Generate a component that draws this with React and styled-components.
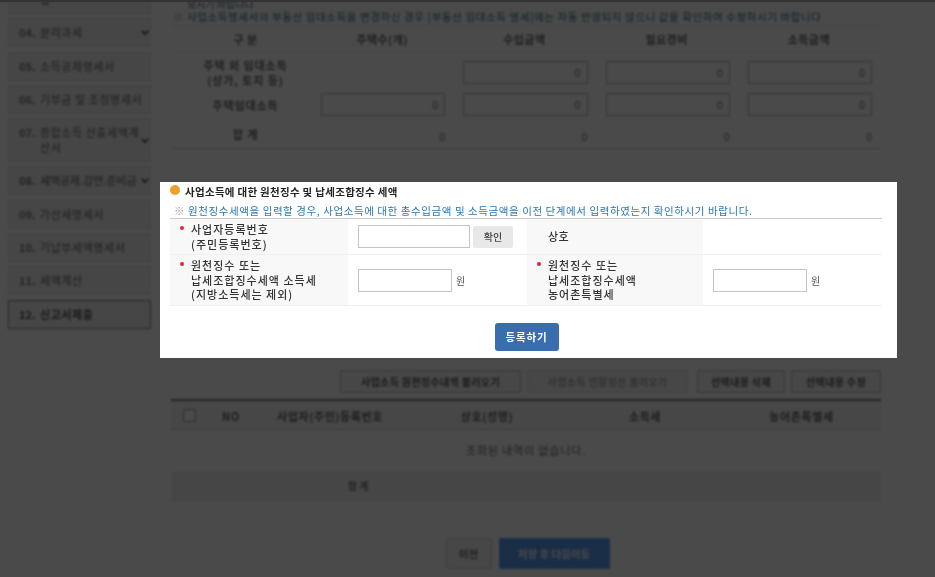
import React from "react";
import styled, { createGlobalStyle } from "styled-components";

const sideItems = [
  { no: "03.", label: "주택임대소득 명세 및 합", height: 44 },
  { no: "04.", label: "분리과세", arrow: true },
  { no: "05.", label: "소득공제명세서" },
  { no: "06.", label: "기부금 및 조정명세서" },
  { no: "07.", label: "종합소득 산출세액계산서", arrow: true, height: 44 },
  { no: "08.", label: "세액공제.감면.준비금", arrow: true, tight: true },
  { no: "09.", label: "가산세명세서" },
  { no: "10.", label: "기납부세액명세서" },
  { no: "11.", label: "세액계산" },
  { no: "12.", label: "신고서제출", active: true },
];

const Chevron = () => (
  <ArrowIcon viewBox="0 0 10 6">
    <path d="M1 1l4 4 4-4" fill="none" stroke="currentColor" strokeWidth="2" />
  </ArrowIcon>
);

const App = () => {
  return (
    <Screen>
      <GlobalStyle />
      <Page>
        <Sidebar>
          {sideItems.map((item) => (
            <SideItem key={item.no} $active={item.active} $height={item.height}>
              <SideNo>{item.no}</SideNo>
              <SideLabel $tight={item.tight}>{item.label}</SideLabel>
              {item.arrow && <Chevron />}
            </SideItem>
          ))}
        </Sidebar>
        <Main>
          <TopNote>보시기 바랍니다</TopNote>
          <BlueNote>
            <Mark>※</Mark> 사업소득명세서의 부동산 임대소득을 변경하신 경우 [부동산 임대소득 명세]에는 자동 반영되지 않으니 값을 확인하여 수정하시기 바랍니다
          </BlueNote>
          <RentTable>
            <thead>
              <tr>
                <RentHead>구 분</RentHead>
                <RentHead>주택수(개)</RentHead>
                <RentHead>수입금액</RentHead>
                <RentHead>필요경비</RentHead>
                <RentHead>소득금액</RentHead>
              </tr>
            </thead>
            <tbody>
              <tr>
                <RentLabel>
                  주택 외 임대소득
                  <br />
                  (상가, 토지 등)
                </RentLabel>
                <RentCell />
                <RentCell><NumberBox>0</NumberBox></RentCell>
                <RentCell><NumberBox>0</NumberBox></RentCell>
                <RentCell><NumberBox>0</NumberBox></RentCell>
              </tr>
              <tr>
                <RentLabel>주택임대소득</RentLabel>
                <RentCell><NumberBox>0</NumberBox></RentCell>
                <RentCell><NumberBox>0</NumberBox></RentCell>
                <RentCell><NumberBox>0</NumberBox></RentCell>
                <RentCell><NumberBox>0</NumberBox></RentCell>
              </tr>
              <RentTotalRow>
                <RentLabel>합 계</RentLabel>
                <RentCell><PlainNumber>0</PlainNumber></RentCell>
                <RentCell><PlainNumber>0</PlainNumber></RentCell>
                <RentCell><PlainNumber>0</PlainNumber></RentCell>
                <RentCell><PlainNumber>0</PlainNumber></RentCell>
              </RentTotalRow>
            </tbody>
          </RentTable>
          <ActionBar>
            <ActionButton $width={181}>사업소득 원천징수내역 불러오기</ActionButton>
            <ActionButton $width={161} $disabled>사업소득 연말정산 불러오기</ActionButton>
            <ActionButton $width={88} $gap={3}>선택내용 삭제</ActionButton>
            <ActionButton $width={90}>선택내용 수정</ActionButton>
          </ActionBar>
          <ListTable>
            <thead>
              <tr>
                <ListHead $width={37}><CheckBox /></ListHead>
                <ListHead $width={46}>NO</ListHead>
                <ListHead $width={152}>사업자(주민)등록번호</ListHead>
                <ListHead $width={162}>상호(성명)</ListHead>
                <ListHead $width={154}>소득세</ListHead>
                <ListHead>농어촌특별세</ListHead>
              </tr>
            </thead>
            <tbody>
              <tr>
                <EmptyCell colSpan={6}>조회된 내역이 없습니다.</EmptyCell>
              </tr>
              <tr>
                <TotalCell colSpan={3}>합 계</TotalCell>
                <TotalCell colSpan={3} />
              </tr>
            </tbody>
          </ListTable>
          <Footer>
            <PrevButton>이전</PrevButton>
            <NextButton>저장 후 다음이동</NextButton>
          </Footer>
        </Main>
      </Page>
      <Dim />
      <Modal>
        <ModalTitle>
          <TitleDot />
          사업소득에 대한 원천징수 및 납세조합징수 세액
        </ModalTitle>
        <ModalNote>
          <Mark>※</Mark> 원천징수세액을 입력할 경우, 사업소득에 대한 총수입금액 및 소득금액을 이전 단계에서 입력하였는지 확인하시기 바랍니다.
        </ModalNote>
        <FormTable>
          <tbody>
            <tr>
              <FormHead $width={178} $height={36}>
                <Required>
                  사업자등록번호
                  <br />
                  (주민등록번호)
                </Required>
              </FormHead>
              <FormCell $width={179}>
                <FieldRow>
                  <TextBox $width={112} />
                  <CheckButton>확인</CheckButton>
                </FieldRow>
              </FormCell>
              <FormHead $width={176}>
                <PlainHead>상호</PlainHead>
              </FormHead>
              <FormCell />
            </tr>
            <tr>
              <FormHead $height={51}>
                <Required>
                  원천징수 또는
                  <br />
                  납세조합징수세액 소득세
                  <br />
                  (지방소득세는 제외)
                </Required>
              </FormHead>
              <FormCell>
                <FieldRow>
                  <TextBox $width={94} />
                  <Unit>원</Unit>
                </FieldRow>
              </FormCell>
              <FormHead>
                <Required>
                  원천징수 또는
                  <br />
                  납세조합징수세액
                  <br />
                  농어촌특별세
                </Required>
              </FormHead>
              <FormCell>
                <FieldRow>
                  <TextBox $width={94} />
                  <Unit>원</Unit>
                </FieldRow>
              </FormCell>
            </tr>
          </tbody>
        </FormTable>
        <ModalActions>
          <RegisterButton>등록하기</RegisterButton>
        </ModalActions>
      </Modal>
    </Screen>
  );
};

const GlobalStyle = createGlobalStyle`
  html, body {
    margin: 0;
    padding: 0;
    background: #4a4a4a;
  }
  * {
    box-sizing: border-box;
  }
`;

const Screen = styled.div`
  position: relative;
  width: 935px;
  height: 577px;
  overflow: hidden;
  font-family: "Noto Sans CJK KR", "Noto Sans", sans-serif;
  background: #fff;
`;

const Page = styled.div`
  display: flex;
  align-items: flex-start;
  margin-top: -30px;
  padding-left: 8px;
  filter: blur(0.8px);
`;

const Sidebar = styled.div`
  display: flex;
  flex-direction: column;
  gap: 4.3px;
  width: 143px;
`;

const SideItem = styled.div`
  display: flex;
  align-items: center;
  height: ${(p) => p.$height || 29}px;
  padding: 0 0 0 10px;
  background: #f0f0f0;
  border: 1px solid ${(p) => (p.$active ? "#7c86a8" : "#e4e4e4")};
  font-size: 11px;
  line-height: 15px;
  color: ${(p) => (p.$active ? "#555" : "#808080")};
  font-weight: ${(p) => (p.$active ? 700 : 500)};
`;

const SideNo = styled.span`
  flex: none;
  width: 21px;
  font-weight: 700;
  align-self: flex-start;
  margin-top: 6px;
`;

const SideLabel = styled.span`
  flex: 1;
  min-width: 0;
  letter-spacing: ${(p) => (p.$tight ? "-0.1px" : "0.55px")};
  white-space: ${(p) => (p.$tight ? "nowrap" : "normal")};
`;

const ArrowIcon = styled.svg`
  flex: none;
  width: 8px;
  height: 5px;
  margin-right: 1px;
  color: #444;
`;

const Main = styled.div`
  width: 710px;
  margin-left: 20px;
  padding-top: 27px;
`;

const TopNote = styled.div`
  padding-left: 16px;
  font-size: 10px;
  line-height: 13px;
  color: #3f6f8c;
`;

const BlueNote = styled.div`
  padding-left: 2px;
  font-size: 10.5px;
  line-height: 14px;
  letter-spacing: 0.6px;
  color: #2a7099;
  white-space: nowrap;
`;

const Mark = styled.span`
  color: #9a9a9a;
`;

const RentTable = styled.table`
  width: 709px;
  margin-top: 1px;
  border-collapse: collapse;
  table-layout: fixed;
  border-top: 1px solid #e4e4e4;
  border-bottom: 1px solid #d4d4d4;
  tbody tr:first-child td {
    padding-top: 5px;
  }
`;

const RentHead = styled.th`
  height: 26px;
  font-size: 11px;
  font-weight: 700;
  letter-spacing: 0.4px;
  color: #666;
  text-align: center;
  border-bottom: 1px solid #eee;
  &:first-child {
    width: 140px;
    padding-left: 10px;
  }
`;

const RentLabel = styled.td`
  padding-left: 10px;
  font-size: 11px;
  line-height: 15px;
  font-weight: 700;
  letter-spacing: 0.9px;
  color: #6a6a6a;
  text-align: center;
`;

const RentCell = styled.td`
  padding: 0 8px 0 10px;
  text-align: right;
`;

const RentTotalRow = styled.tr`
  td {
    height: 27px;
  }
`;

const NumberBox = styled.div`
  height: 23px;
  margin: 4px 0 5px;
  padding-right: 6px;
  border: 1px solid #bbb;
  background: #fff;
  font-size: 11px;
  line-height: 21px;
  text-align: right;
  color: #777;
`;

const PlainNumber = styled.span`
  font-size: 11px;
  color: #777;
`;

const ActionBar = styled.div`
  display: flex;
  justify-content: flex-end;
  gap: 6px;
  width: 710px;
  margin-top: 221px;
`;

const ActionButton = styled.div`
  width: ${(p) => p.$width}px;
  height: 23px;
  margin-left: ${(p) => p.$gap || 0}px;
  border: 1px solid ${(p) => (p.$disabled ? "#ddd" : "#bbb")};
  border-radius: 2px;
  background: #f4f4f4;
  color: ${(p) => (p.$disabled ? "#aaa" : "#555")};
  font-size: 10px;
  font-weight: 700;
  line-height: 21px;
  letter-spacing: 0.35px;
  text-align: center;
  white-space: nowrap;
`;

const ListTable = styled.table`
  width: 710px;
  margin-top: 6px;
  border-collapse: collapse;
  table-layout: fixed;
  border-top: 2px solid #777;
`;

const ListHead = styled.th`
  ${(p) => (p.$width ? `width: ${p.$width}px;` : "")}
  height: 30px;
  padding-top: 3px;
  background: #f4f4f4;
  border-bottom: 1px solid #c8c8c8;
  font-size: 11px;
  font-weight: 700;
  letter-spacing: 0.6px;
  color: #666;
  text-align: center;
`;

const CheckBox = styled.span`
  display: inline-block;
  width: 13px;
  height: 13px;
  margin-top: -4px;
  vertical-align: middle;
  border: 1px solid #999;
  border-radius: 2px;
  background: #fff;
`;

const EmptyCell = styled.td`
  height: 41px;
  font-size: 11px;
  letter-spacing: 0.85px;
  color: #666;
  text-align: center;
`;

const TotalCell = styled.td`
  height: 30px;
  padding-left: 140px;
  background: #f2f2f2;
  border-bottom: 1px solid #e2e2e2;
  font-size: 10px;
  font-weight: 700;
  color: #777;
  text-align: center;
`;

const Footer = styled.div`
  display: flex;
  justify-content: center;
  gap: 7px;
  width: 710px;
  margin-top: 37px;
  padding-left: 3px;
`;

const PrevButton = styled.div`
  width: 46px;
  height: 31px;
  border: 1px solid #d8d8d8;
  border-radius: 2px;
  background: #f4f4f4;
  color: #666;
  font-size: 10.5px;
  font-weight: 700;
  line-height: 29px;
  text-align: center;
`;

const NextButton = styled.div`
  width: 111px;
  height: 31px;
  border-radius: 2px;
  background: #5c9cf0;
  color: #fff;
  font-size: 10.5px;
  font-weight: 700;
  line-height: 31px;
  text-align: center;
`;

const Dim = styled.div`
  position: absolute;
  inset: 0;
  border-top: 2px solid #333;
  background: rgba(0, 0, 0, 0.71);
`;

const Modal = styled.div`
  position: absolute;
  left: 160px;
  top: 182px;
  width: 737px;
  height: 176px;
  padding: 0 15px 0 10px;
  background: #fff;
  filter: blur(0.5px);
`;

const ModalTitle = styled.div`
  position: relative;
  padding: 2px 0 0 15px;
  height: 22px;
  font-size: 10.5px;
  font-weight: 700;
  line-height: 16px;
  letter-spacing: 0.3px;
  color: #222;
`;

const TitleDot = styled.span`
  position: absolute;
  left: 0;
  top: 3px;
  width: 10px;
  height: 10px;
  border-radius: 50%;
  background: #eea02a;
`;

const ModalNote = styled.div`
  padding-left: 4px;
  height: 14px;
  font-size: 10.5px;
  line-height: 14px;
  letter-spacing: 0.58px;
  color: #2a78b0;
  white-space: nowrap;
`;

const FormTable = styled.table`
  width: 712px;
  border-collapse: collapse;
  table-layout: fixed;
  border-top: 1px solid #ccc;
  border-bottom: 1px solid #ccc;
`;

const FormHead = styled.td`
  ${(p) => (p.$width ? `width: ${p.$width}px;` : "")}
  ${(p) => (p.$height ? `height: ${p.$height}px;` : "")}
  background: #f8f8f8;
  border-bottom: 1px solid #f0f0f0;
  font-size: 11px;
  font-weight: 500;
  line-height: 14.5px;
  color: #333;
  vertical-align: middle;
`;

const FormCell = styled.td`
  ${(p) => (p.$width ? `width: ${p.$width}px;` : "")}
  padding-left: 10px;
  border-bottom: 1px solid #f0f0f0;
  vertical-align: middle;
`;

const Required = styled.div`
  position: relative;
  padding-left: 20px;
  letter-spacing: 1px;
  white-space: nowrap;
  &::before {
    content: "";
    position: absolute;
    left: 9px;
    top: 4px;
    width: 4px;
    height: 4px;
    border-radius: 50%;
    background: #d8263a;
  }
`;

const PlainHead = styled.div`
  padding-left: 20px;
  letter-spacing: 0.5px;
`;

const FieldRow = styled.div`
  display: flex;
  align-items: center;
  gap: 3px;
`;

const TextBox = styled.div`
  width: ${(p) => p.$width}px;
  height: 23px;
  border: 1px solid #c4c4c4;
  background: #fff;
`;

const CheckButton = styled.div`
  width: 40px;
  height: 22px;
  border-radius: 2px;
  background: #e8e8e8;
  color: #444;
  font-size: 10px;
  font-weight: 500;
  line-height: 22px;
  text-align: center;
`;

const Unit = styled.span`
  margin-left: 1px;
  font-size: 10px;
  color: #555;
`;

const ModalActions = styled.div`
  display: flex;
  justify-content: center;
  margin-top: 17px;
  padding-left: 1px;
`;

const RegisterButton = styled.div`
  width: 64px;
  height: 28px;
  border-radius: 3px;
  background: #3a6dae;
  color: #fff;
  font-size: 10.5px;
  font-weight: 700;
  line-height: 28px;
  letter-spacing: 0.9px;
  text-align: center;
`;

export default App;
